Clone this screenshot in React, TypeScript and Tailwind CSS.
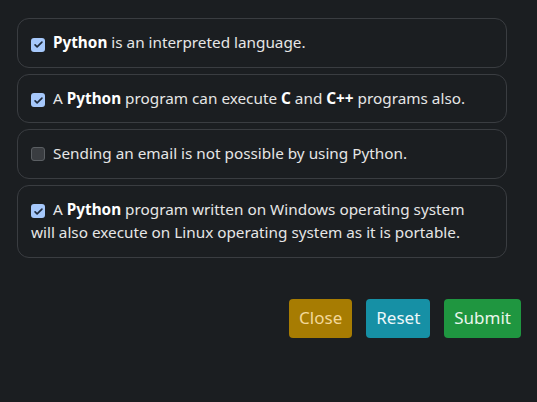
import React from "react";

const Check = ({ checked }: { checked: boolean }) =>
  checked ? (
    <span className="inline-flex align-[-2px] mr-[8px] w-[14px] h-[14px] rounded-[3px] bg-[#a6c8fb] items-center justify-center">
      <svg width="11" height="11" viewBox="0 0 16 16">
        <path d="M3 8.5l3 3 7-7" fill="none" stroke="#1d2a3c" strokeWidth="2.4" strokeLinecap="round" strokeLinejoin="round" />
      </svg>
    </span>
  ) : (
    <span className="inline-block align-[-2px] mr-[8px] w-[14px] h-[14px] rounded-[3px] bg-[#3a3d41] border border-[#5b5f63]" />
  );

const Card = ({ checked, children }: { checked: boolean; children: React.ReactNode }) => (
  <div className="w-[490px] rounded-[12px] border border-[#3a3d41] pl-[13px] pr-[18px] py-[12px] text-[15.3px] leading-[23.5px] text-[#e6e6e6]">
    <Check checked={checked} />
    {children}
  </div>
);

export default function App() {
  return (
    <div className="w-[537px] h-[402px] bg-[#1b1e21] pl-[17px] pt-[18px]" style={{ fontFamily: '"Noto Sans", "Open Sans", sans-serif' }}>
      <div className="flex flex-col gap-[6px]">
        <Card checked>
          <b className="font-bold text-white">Python</b> is an interpreted language.
        </Card>
        <Card checked>
          A <b className="font-bold text-white">Python</b> program can execute <b className="font-bold text-white">C</b> and{" "}
          <b className="font-bold text-white">C++</b> programs also.
        </Card>
        <Card checked={false}>Sending an email is not possible by using Python.</Card>
        <Card checked>
          A <b className="font-bold text-white">Python</b> program written on Windows operating system will also execute on Linux operating system as it is portable.
        </Card>
      </div>
      <div className="w-[504px] flex justify-end gap-[14px] mt-[41px]">
        <button className="h-[39px] px-[10px] rounded-[4px] bg-[#a77c02] text-[#f3d89a] text-[17px]">Close</button>
        <button className="h-[39px] px-[10px] rounded-[4px] bg-[#1690a5] text-[#eef8fa] text-[17px]">Reset</button>
        <button className="h-[39px] px-[10px] rounded-[4px] bg-[#1f9640] text-[#eaf6ec] text-[17px]">Submit</button>
      </div>
    </div>
  );
}
